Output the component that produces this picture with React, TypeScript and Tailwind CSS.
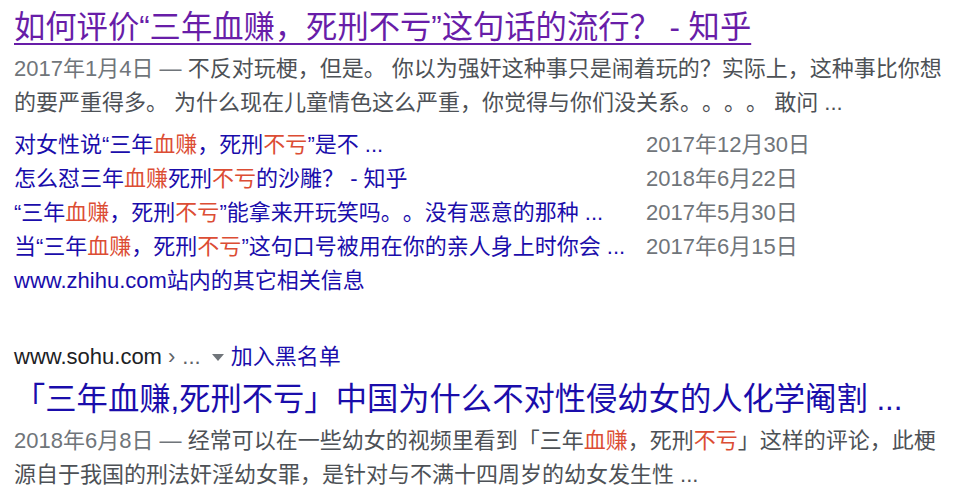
import React from 'react';

const FONT = '"Liberation Sans", Arial, "Noto Sans CJK SC", sans-serif';

// highlighted keyword inside a result
const Em = ({ children }: { children: React.ReactNode }) => (
  <span className="text-[#dc4d34]">{children}</span>
);

const sitelinks = [
  {
    title: (
      <>
        对女性说“三年<Em>血赚</Em>，死刑<Em>不亏</Em>”是不 ...
      </>
    ),
    date: '2017年12月30日',
  },
  {
    title: (
      <>
        怎么怼三年<Em>血赚</Em>死刑<Em>不亏</Em>的沙雕？ - 知乎
      </>
    ),
    date: '2018年6月22日',
  },
  {
    title: (
      <>
        “三年<Em>血赚</Em>，死刑<Em>不亏</Em>”能拿来开玩笑吗。。没有恶意的那种 ...
      </>
    ),
    date: '2017年5月30日',
  },
  {
    title: (
      <>
        当“三年<Em>血赚</Em>，死刑<Em>不亏</Em>”这句口号被用在你的亲人身上时你会 ...
      </>
    ),
    date: '2017年6月15日',
  },
];

export default function App() {
  return (
    <div
      className="w-[961px] h-[497px] overflow-hidden bg-white pl-[14px] pt-[8px] [text-spacing-trim:space-all]"
      style={{ fontFamily: FONT }}
    >
      {/* result 1 */}
      <div className="flex flex-col">
        <a className="text-[31.3px] leading-[39px] text-[#681da8] underline decoration-2 underline-offset-[5px] whitespace-nowrap">
          如何评价“三年血赚，死刑不亏”这句话的流行？ - 知乎
        </a>
        <div className="mt-[5px] text-[22px] leading-[34px] text-[#4d5156] w-[930px]">
          <span className="text-[#70757a]">2017年1月4日 — </span>
          不反对玩梗，但是。 你以为强奸这种事只是闹着玩的？实际上，这种事比你想的要严重得多。 为什么现在儿童情色这么严重，你觉得与你们没关系。。。。 敢问 ...
        </div>
        <div className="mt-[8px] grid grid-cols-[632px_auto] text-[22px] leading-[34px]">
          {sitelinks.map((s, i) => (
            <React.Fragment key={i}>
              <a className="text-[#1a0dab] whitespace-nowrap">{s.title}</a>
              <span className="text-[#70757a] whitespace-nowrap">{s.date}</span>
            </React.Fragment>
          ))}
        </div>
        <a className="text-[22px] leading-[34px] text-[#1a0dab] whitespace-nowrap">www.zhihu.com站内的其它相关信息</a>
      </div>

      {/* result 2 */}
      <div className="mt-[42px] flex flex-col">
        <div className="flex items-center text-[22px] leading-[34px] whitespace-nowrap">
          <span className="text-[#202124]">www.sohu.com</span>
          <span className="text-[#5f6368] ml-[6px]">›</span>
          <span className="text-[#5f6368] ml-[7px]">...</span>
          <svg width="14" height="8" viewBox="0 0 14 8" className="ml-[10px] mt-[2px]">
            <path d="M1 0h12L7 7z" fill="#70757a" />
          </svg>
          <a className="text-[#1a0dab] ml-[6px]">加入黑名单</a>
        </div>
        <a className="mt-[6px] text-[31.3px] leading-[39px] text-[#1a0dab] whitespace-nowrap">
          「三年血赚,死刑不亏」中国为什么不对性侵幼女的人化学阉割 ...
        </a>
        <div className="mt-[5px] text-[22px] leading-[34px] text-[#4d5156] w-[930px]">
          <span className="text-[#70757a]">2018年6月8日 — </span>
          经常可以在一些幼女的视频里看到「三年<Em>血赚</Em>，死刑<Em>不亏</Em>」这样的评论，此梗源自于我国的刑法奸淫幼女罪，是针对与不满十四周岁的幼女发生性 ...
        </div>
      </div>
    </div>
  );
}
